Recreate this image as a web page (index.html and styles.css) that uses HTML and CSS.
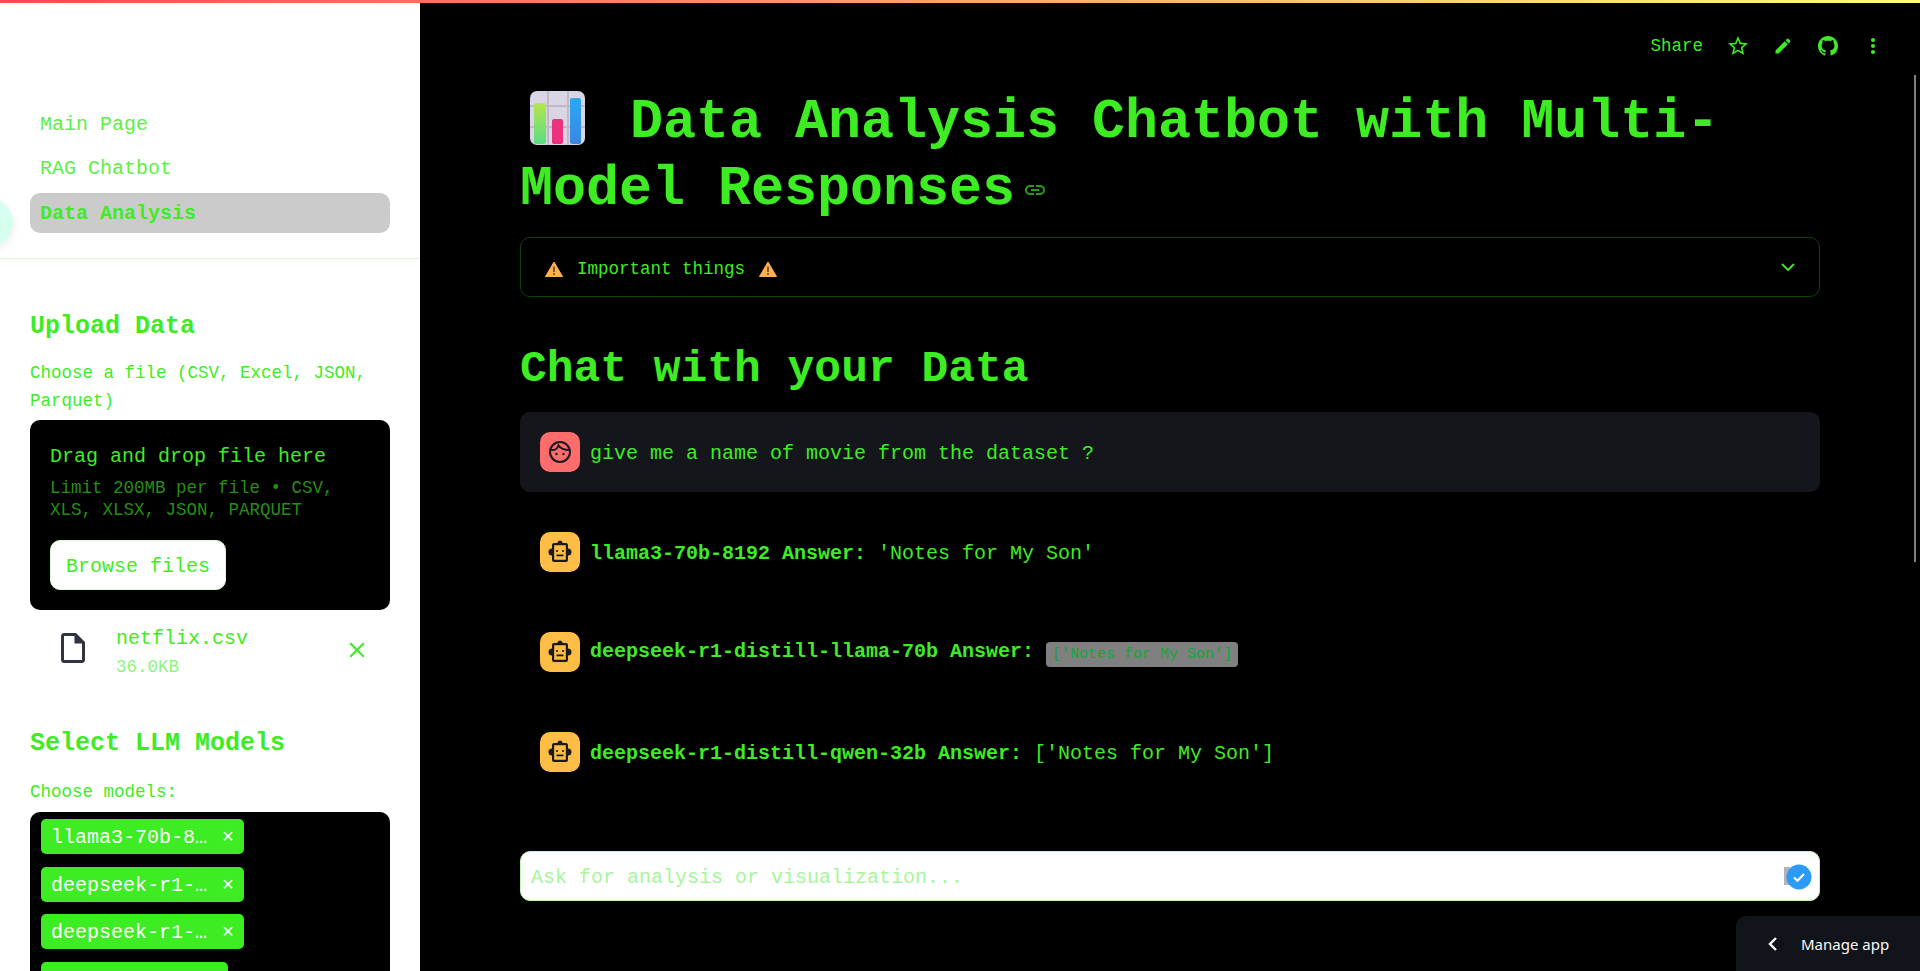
FILE: index.html
```html
<!doctype html>
<html>
    <head>
        <meta charset="utf-8">
        <title>Data Analysis</title>
        <link rel="stylesheet" href="styles.css">
    </head>
    <body>
      <div class="decoration"></div>
      <div class="app">
        <aside class="sidebar">
          <nav class="nav">
            <a class="nav-item">Main Page</a>
            <a class="nav-item">RAG Chatbot</a>
            <a class="nav-item active">Data Analysis</a>
          </nav>
          <span class="collapse-dot"></span>
          <section class="side-body">
            <h3 class="side-title first">Upload Data</h3>
            <p class="label">Choose a file (CSV, Excel, JSON, Parquet)</p>
            <div class="dropzone">
              <div class="drop-title">Drag and drop file here</div>
              <div class="drop-limit">Limit 200MB per file • CSV, XLS, XLSX, JSON, PARQUET</div>
              <button class="browse">Browse files</button>
            </div>
            <div class="file-row">
              <svg class="file-icon" viewBox="0 0 24 24"><path d="M14 2H6c-1.1 0-1.99.9-1.99 2L4 20c0 1.1.89 2 1.99 2H18c1.1 0 2-.9 2-2V8l-6-6zM6 20V4h7v5h5v11H6z"/></svg>
              <div class="file-info">
                <div class="file-name">netflix.csv</div>
                <div class="file-size">36.0KB</div>
              </div>
              <svg class="file-close" viewBox="0 0 24 24"><path d="M19 6.41L17.59 5 12 10.59 6.41 5 5 6.41 10.59 12 5 17.59 6.41 19 12 13.41 17.59 19 19 17.59 13.41 12z"/></svg>
            </div>
            <h3 class="side-title second">Select LLM Models</h3>
            <p class="label models-label">Choose models:</p>
            <div class="multiselect">
              <div class="chip"><span>llama3-70b-8…</span><i>×</i></div>
              <div class="chip"><span>deepseek-r1-…</span><i>×</i></div>
              <div class="chip"><span>deepseek-r1-…</span><i>×</i></div>
              <div class="chip chip-cut"></div>
            </div>
          </section>
        </aside>

        <main class="main">
          <header class="toolbar">
            <span class="share">Share</span>
            <span class="tool"><svg width="24" height="24" viewBox="0 0 24 24"><path d="M22 9.24l-7.19-.62L12 2 9.19 8.63 2 9.24l5.46 4.73L5.82 21 12 17.27 18.18 21l-1.63-7.03L22 9.24zM12 15.4l-3.76 2.27 1-4.28-3.32-2.88 4.38-.38L12 6.1l1.71 4.04 4.38.38-3.32 2.88 1 4.28L12 15.4z"/></svg></span>
            <span class="tool"><svg width="20" height="20" viewBox="0 0 24 24"><path d="M3 17.25V21h3.75L17.81 9.94l-3.75-3.75L3 17.25zM20.71 7.04c.39-.39.39-1.02 0-1.41l-2.34-2.34c-.39-.39-1.02-.39-1.41 0l-1.83 1.83 3.75 3.75 1.83-1.83z"/></svg></span>
            <span class="tool"><svg width="20" height="20" viewBox="0 0 16 16"><path d="M8 0C3.58 0 0 3.58 0 8c0 3.54 2.29 6.53 5.47 7.59.4.07.55-.17.55-.38 0-.19-.01-.82-.01-1.49-2.01.37-2.53-.49-2.69-.94-.09-.23-.48-.94-.82-1.13-.28-.15-.68-.52-.01-.53.63-.01 1.08.58 1.23.82.72 1.21 1.87.87 2.33.66.07-.52.28-.87.51-1.07-1.78-.2-3.64-.89-3.64-3.95 0-.87.31-1.59.82-2.15-.08-.2-.36-1.02.08-2.12 0 0 .67-.21 2.2.82.64-.18 1.32-.27 2-.27.68 0 1.36.09 2 .27 1.53-1.04 2.2-.82 2.2-.82.44 1.1.16 1.92.08 2.12.51.56.82 1.27.82 2.15 0 3.07-1.87 3.75-3.65 3.95.29.25.54.73.54 1.48 0 1.07-.01 1.93-.01 2.2 0 .21.15.46.55.38A8.013 8.013 0 0016 8c0-4.42-3.58-8-8-8z"/></svg></span>
            <span class="tool"><svg width="24" height="24" viewBox="0 0 24 24"><path d="M12 8c1.1 0 2-.9 2-2s-.9-2-2-2-2 .9-2 2 .9 2 2 2zm0 2c-1.1 0-2 .9-2 2s.9 2 2 2 2-.9 2-2-.9-2-2-2zm0 6c-1.1 0-2 .9-2 2s.9 2 2 2 2-.9 2-2-.9-2-2-2z"/></svg></span>
          </header>

          <div class="content">
            <h1 class="title">
              <svg class="chart-emoji" viewBox="0 0 55 54">
                <defs>
                  <linearGradient id="bar-a" x1="0" y1="0" x2="0" y2="1"><stop offset="0" stop-color="#b5e54a"/><stop offset="1" stop-color="#58dd86"/></linearGradient>
                  <linearGradient id="bar-b" x1="0" y1="0" x2="0" y2="1"><stop offset="0" stop-color="#e8357a"/><stop offset="1" stop-color="#ee2f80"/></linearGradient>
                  <linearGradient id="bar-c" x1="0" y1="0" x2="0" y2="1"><stop offset="0" stop-color="#2aa9f5"/><stop offset="1" stop-color="#3a86e0"/></linearGradient>
                </defs>
                <rect width="55" height="54" rx="7" fill="#d9d5e4"/>
                <path d="M18 0v54M38 0v54M0 15h55M0 36h55" stroke="#bdb9c6" stroke-width="2"/>
                <rect x="4" y="12" width="12" height="41" rx="2" fill="url(#bar-a)"/>
                <rect x="22" y="28" width="11" height="25" rx="2" fill="url(#bar-b)"/>
                <rect x="40" y="7" width="11" height="46" rx="2" fill="url(#bar-c)"/>
              </svg>
              Data Analysis Chatbot with Multi-Model Responses<svg class="anchor" width="24" height="24" viewBox="0 0 24 24"><path d="M3.9 12c0-1.71 1.39-3.1 3.1-3.1h4V7H7c-2.76 0-5 2.24-5 5s2.24 5 5 5h4v-1.9H7c-1.71 0-3.1-1.39-3.1-3.1zM8 13h8v-2H8v2zm9-6h-4v1.9h4c1.71 0 3.1 1.39 3.1 3.1s-1.39 3.1-3.1 3.1h-4V17h4c2.76 0 5-2.24 5-5s-2.24-5-5-5z"/></svg>
            </h1>

            <div class="expander">
              <svg class="warn" viewBox="0 0 18 16"><path d="M9 1L17.5 15.5H.5z" fill="#ffb04f" stroke="#ffb04f" stroke-linejoin="round"/><path d="M9 5.5v5.5" stroke="#5b4636" stroke-width="1.6"/><circle cx="9" cy="13" r="1" fill="#5b4636"/></svg>
              <span class="expander-text">Important things</span>
              <svg class="warn" viewBox="0 0 18 16"><path d="M9 1L17.5 15.5H.5z" fill="#ffb04f" stroke="#ffb04f" stroke-linejoin="round"/><path d="M9 5.5v5.5" stroke="#5b4636" stroke-width="1.6"/><circle cx="9" cy="13" r="1" fill="#5b4636"/></svg>
              <svg class="chevron" viewBox="0 0 24 24"><path d="M4 8l8 8 8-8" fill="none" stroke-width="2.4"/></svg>
            </div>

            <h2 class="chat-title">Chat with your Data</h2>

            <div class="message user">
              <span class="avatar avatar-user"><svg width="26" height="26" viewBox="0 0 26 26"><g fill="none" stroke="#1c1520" stroke-width="2"><circle cx="13" cy="13" r="10"/><path d="M3.5 11c4 .5 7-1.500 8-4.500 2 3 5.500 4.500 11 4.500"/></g><circle cx="9.500" cy="15" r="1.200" fill="#1c1520"/><circle cx="16.500" cy="15" r="1.200" fill="#1c1520"/></svg></span>
              <span class="msg-text">give me a name of movie from the dataset ?</span>
            </div>

            <div class="message">
              <span class="avatar avatar-bot"><svg width="26" height="26" viewBox="0 0 26 26"><use href="#bot-icon"/></svg></span>
              <span class="msg-text"><b>llama3-70b-8192 Answer:</b> 'Notes for My Son'</span>
            </div>
            <div class="message">
              <span class="avatar avatar-bot"><svg width="26" height="26" viewBox="0 0 26 26"><use href="#bot-icon"/></svg></span>
              <span class="msg-text"><b>deepseek-r1-distill-llama-70b Answer:</b> <code class="inline-code">['Notes for My Son']</code></span>
            </div>
            <div class="message">
              <span class="avatar avatar-bot"><svg width="26" height="26" viewBox="0 0 26 26"><use href="#bot-icon"/></svg></span>
              <span class="msg-text"><b>deepseek-r1-distill-qwen-32b Answer:</b> ['Notes for My Son']</span>
            </div>

            <div class="chat-input">
              <span class="chat-placeholder">Ask for analysis or visualization...</span>
              <span class="send-bits"></span>
              <svg class="badge" viewBox="0 0 26 26"><circle cx="13" cy="13" r="12.500" fill="#2b9bfa"/><path d="M8 13.500l3.500 3.200L18 10" fill="none" stroke="#fff" stroke-width="2.200"/></svg>
            </div>
          </div>

          <span class="scrollbar"></span>
          <div class="manage"><svg width="14" height="18" viewBox="0 0 14 18"><path d="M10 3L4 9l6 6" fill="none" stroke="#fafafa" stroke-width="2.400"/></svg><span>Manage app</span></div>
        </main>
      </div>

      <svg class="defs" width="0" height="0">
        <symbol id="bot-icon" viewBox="0 0 26 26">
          <path fill="#1c1a1a" d="M13 1.500a2.700 2.700 0 0 1 2.600 2.500H19a2 2 0 0 1 2 2v3.500a3.500 3.500 0 0 1 0 7V21a2 2 0 0 1-2 2H7a2 2 0 0 1-2-2v-4.500a3.500 3.500 0 0 1 0-7V6a2 2 0 0 1 2-2h3.400A2.700 2.700 0 0 1 13 1.500zM7.200 6.200v14.600h11.600V6.200z"/>
          <circle cx="10" cy="12" r="1.100" fill="#1c1a1a"/><circle cx="16" cy="12" r="1.100" fill="#1c1a1a"/>
          <rect x="9.500" y="15.500" width="7" height="1.800" fill="#1c1a1a"/>
        </symbol>
      </svg>
    </body>
</html>
```

FILE: styles.css
```css
* { box-sizing: border-box; }
html, body { margin: 0; height: 100%; overflow: hidden; }
body { background: #000; color: #3eec24; font-family: "Liberation Mono", "DejaVu Sans Mono", monospace; font-size: 20px; }

.decoration { height: 3px; background: linear-gradient(90deg, #ff4b4b, #fffd80); }
.app { display: flex; height: 968px; }
.defs { position: absolute; }

/* sidebar */
.sidebar { position: relative; width: 420px; flex: none; background: #fff; overflow: hidden; }
.nav { display: flex; flex-direction: column; gap: 4px; padding: 102px 30px 25px; border-bottom: 1px solid #d8fdd0; }
.nav-item { height: 40px; line-height: 40px; padding-left: 10px; border-radius: 10px; color: #5cf046; }
.nav-item.active { line-height: 42px; background: #cbcbcb; color: #3eec24; font-weight: bold; }
.collapse-dot { position: absolute; left: -36px; top: 195px; width: 49px; height: 49px; border-radius: 50%; background: #d6fff0; box-shadow: 0 3px 8px rgba(0,0,0,.08); }

.side-body { padding: 0 30px; }
.side-title { margin: 0; font-size: 25px; line-height: 32px; font-weight: bold; }
.side-title.first { margin-top: 52px; }
.side-title.second { margin-top: 50px; }
.label { margin: 16px 0 5px; font-size: 17.5px; line-height: 28px; }
.models-label { margin-top: 18px; margin-bottom: 6px; }

.dropzone { background: #000; border-radius: 10px; padding: 23px 20px 20px; height: 190px; }
.drop-title { line-height: 28px; }
.drop-limit { margin-top: 6px; font-size: 17.5px; line-height: 22px; color: #258e15; }
.browse { display: block; margin-top: 19px; width: 176px; height: 50px; padding: 2px 0 0; background: #fff; color: #3eec24; border: 1px solid #d8fdd0; border-radius: 10px; font: inherit; }

.file-row { display: flex; align-items: center; margin-top: 15px; padding-left: 25px; }
.file-icon { width: 36px; height: 36px; fill: #31333f; flex: none; margin-bottom: 8px; }
.file-info { margin-left: 25px; flex: 1; }
.file-name { line-height: 28px; }
.file-size { margin-top: 3px; font-size: 17.5px; line-height: 22px; color: #8df47d; }
.file-close { width: 26px; height: 26px; fill: #3eec24; flex: none; margin: 0 20px 4px 0; }

.multiselect { display: flex; flex-direction: column; align-items: flex-start; gap: 12.5px; padding: 7px 11px; height: 200px; background: #000; border-radius: 10px; }
.chip { display: flex; align-items: center; width: 203px; height: 35px; padding: 2px 0 0 10px; background: #3eec24; color: #fff; border-radius: 5px; }
.chip i { margin-left: 15px; font-style: normal; }
.chip-cut { width: 187px; }

/* main area */
.main { position: relative; flex: 1; min-width: 0; }
.toolbar { display: flex; align-items: center; justify-content: flex-end; height: 86px; padding: 0 25px 0 0; }
.share { font-size: 17.5px; margin-right: 12px; }
.tool { display: flex; align-items: center; justify-content: center; width: 45px; }
.tool svg { fill: #3eec24; }

.content { padding: 0 100px; }
.title { margin: 0; font-size: 55px; line-height: 67px; font-weight: bold; }
.chart-emoji { display: inline-block; width: 55px; height: 54px; margin: 0 12px 0 10px; vertical-align: -8px; }
.anchor { margin-left: 8px; vertical-align: 2px; fill: #2a9a1a; }

.expander { display: flex; align-items: center; height: 60px; margin-top: 14px; padding: 4px 24px 0; border: 1px solid #123f0b; border-radius: 10px; font-size: 17.5px; }
.warn { width: 18px; height: 16px; flex: none; }
.expander-text { margin: 0 14px; }
.chevron { width: 18px; height: 18px; margin: -4px -2px 0 auto; stroke: #3eec24; }

.chat-title { margin: 44px 0 15px; font-size: 44.6px; line-height: 56px; font-weight: bold; }

.message { display: flex; align-items: center; height: 80px; padding: 0 20px; margin-bottom: 20px; border-radius: 10px; }
.message.user { background: #15161c; }
.avatar { display: flex; align-items: center; justify-content: center; width: 40px; height: 40px; flex: none; border-radius: 10px; }
.avatar-user { background: #ff6c6c; }
.avatar-bot { background: #ffbd45; }
.msg-text { margin-left: 10px; padding-top: 2px; }
.inline-code { display: inline-block; padding: 0 6px; vertical-align: -1px; background: #808080; color: #10a838; font: inherit; font-size: 15px; line-height: 25px; border-radius: 4px; }

.chat-input { position: relative; display: flex; align-items: center; height: 50px; margin-top: 59px; padding: 3px 0 0 10px; background: #fff; border: 1px solid #c0f7b5; border-radius: 10px; }
.chat-placeholder { color: #a8f59c; }
.send-bits { position: absolute; left: 1263px; top: 15px; width: 6px; height: 18px; background: #b0b3bd; }
.badge { position: absolute; left: 1265px; top: 12px; width: 26px; height: 26px; }

.scrollbar { position: absolute; left: 1493.5px; top: 72px; width: 2.5px; height: 487px; background: #808080; }
.manage { position: absolute; right: 0; bottom: 0; display: flex; align-items: center; width: 184px; height: 55px; padding-left: 30px; background: #11141b; color: #fafafa; border-top-left-radius: 10px; font-family: "Noto Sans", sans-serif; font-size: 15px; }
.manage span { margin-left: 21px; }
```
